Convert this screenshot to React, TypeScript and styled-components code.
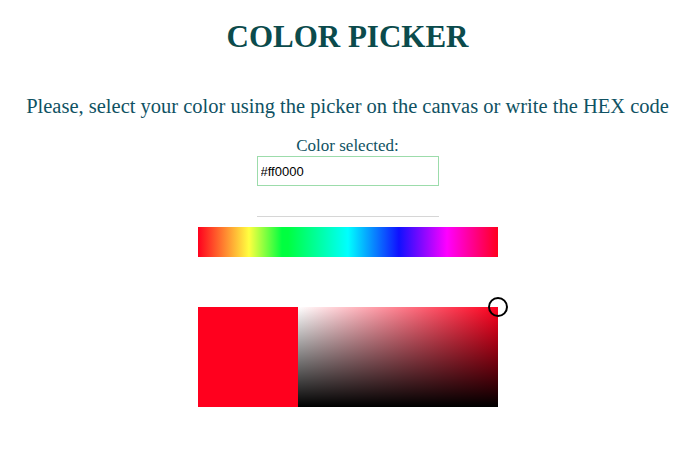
import React, { useState } from "react";
import styled, { createGlobalStyle } from "styled-components";

const GlobalStyle = createGlobalStyle`
  html, body { margin: 0; padding: 0; background: #ffffff; }
  body { font-family: "Liberation Serif", "DejaVu Serif", serif; }
`;

const Page = styled.main`
  display: flex;
  flex-direction: column;
  align-items: center;
  width: 695px;
`;

const Title = styled.h1`
  margin: 18px 0 0;
  font-family: "Liberation Serif", "DejaVu Serif", serif;
  font-weight: 700;
  font-size: 31px;
  line-height: 38px;
  color: #0b4b4c;
`;

const Subtitle = styled.p`
  margin: 38px 0 0;
  font-size: 20.5px;
  line-height: 24px;
  color: #0f5263;
`;

const Label = styled.label`
  margin-top: 18px;
  font-size: 17px;
  line-height: 20px;
  color: #0f5263;
`;

const HexInput = styled.input`
  box-sizing: border-box;
  width: 182px;
  height: 30px;
  padding: 0 3px;
  border: 1px solid #9cdcab;
  outline: none;
  font-family: "Liberation Sans", Arial, sans-serif;
  font-size: 13px;
  color: #000;
`;

const Divider = styled.hr`
  width: 182px;
  margin: 30px 0 0;
  border: none;
  border-top: 1px solid #d6d6d6;
`;

const HueBar = styled.div`
  width: 300px;
  height: 30px;
  margin-top: 10px;
  background: linear-gradient(
    to right,
    #ff001e 0%,
    #ffff40 17%,
    #00ff40 28%,
    #00ff40 30%,
    #00ffff 50%,
    #1010ff 67%,
    #ff00ff 83%,
    #ff001e 100%
  );
`;

const PickerRow = styled.div`
  position: relative;
  display: flex;
  margin-top: 50px;
`;

const Swatch = styled.div<{ $color: string }>`
  width: 100px;
  height: 100px;
  background: ${(p) => p.$color};
`;

const SVCanvas = styled.div<{ $hue: string }>`
  width: 200px;
  height: 100px;
  background: linear-gradient(to top, #000, rgba(0, 0, 0, 0)),
    linear-gradient(to right, #fff, ${(p) => p.$hue});
`;

const Cursor = styled.div`
  position: absolute;
  top: -10px;
  right: -10px;
  width: 16px;
  height: 16px;
  border: 2px solid #000;
  border-radius: 50%;
`;

export default function App() {
  const [hex, setHex] = useState("#ff0000");
  return (
    <>
      <GlobalStyle />
      <Page>
        <Title>COLOR PICKER</Title>
        <Subtitle>
          Please, select your color using the picker on the canvas or write the HEX code
        </Subtitle>
        <Label htmlFor="hex">Color selected:</Label>
        <HexInput id="hex" value={hex} onChange={(e) => setHex(e.target.value)} />
        <Divider />
        <HueBar />
        <PickerRow>
          <Swatch $color="#ff001e" />
          <SVCanvas $hue="#ff001e" />
          <Cursor />
        </PickerRow>
      </Page>
    </>
  );
}
